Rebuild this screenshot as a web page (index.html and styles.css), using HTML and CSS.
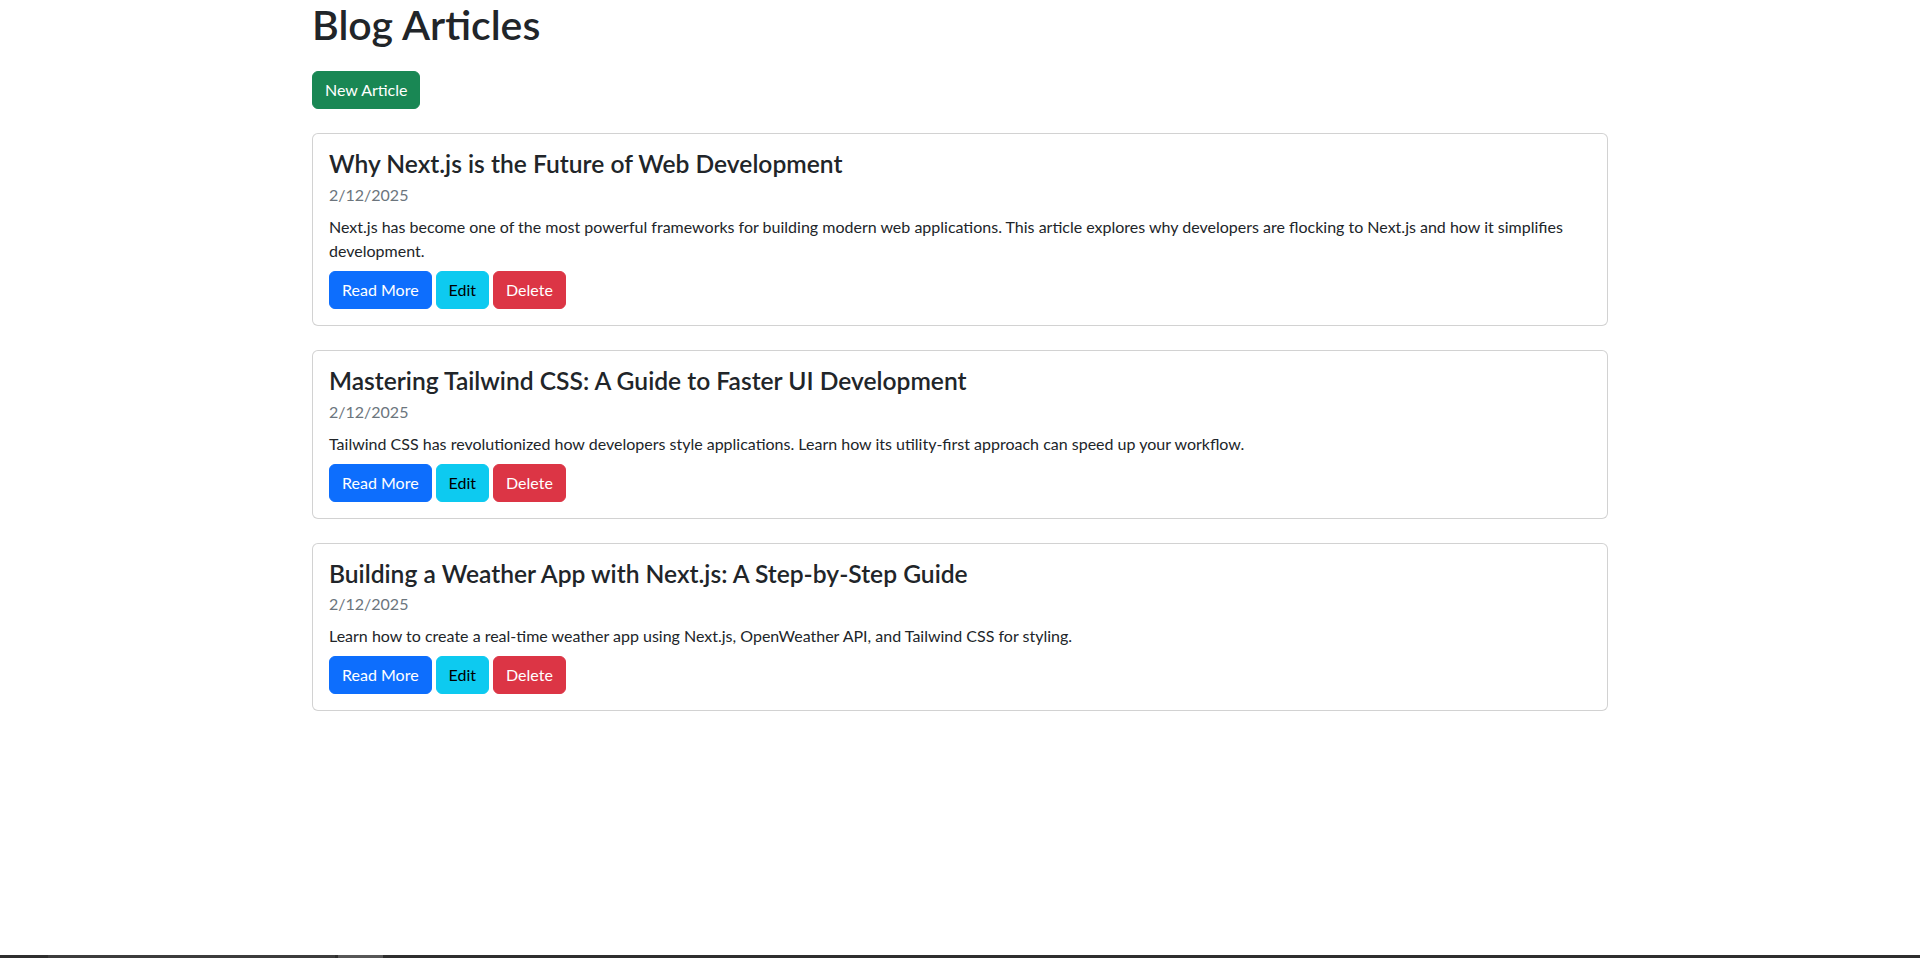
FILE: index.html
```html
<!DOCTYPE html>
<html lang="en">
<head>
<meta charset="utf-8">
<title>Blog Articles</title>
<link rel="stylesheet" href="styles.css">
</head>
<body>
<main class="container">
  <h1 class="page-title">Blog Articles</h1>
  <button class="btn btn-success new-btn" type="button">New Article</button>

  <div class="article-list">
    <div class="card">
      <div class="card-body">
        <h4 class="card-title">Why Next.js is the Future of Web Development</h4>
        <p class="card-date">2/12/2025</p>
        <p class="card-text">Next.js has become one of the most powerful frameworks for building modern web applications. This article explores why developers are flocking to Next.js and how it simplifies development.</p>
        <div class="actions">
          <button class="btn btn-primary" type="button">Read More</button>
          <button class="btn btn-info" type="button">Edit</button>
          <button class="btn btn-danger" type="button">Delete</button>
        </div>
      </div>
    </div>

    <div class="card">
      <div class="card-body">
        <h4 class="card-title">Mastering Tailwind CSS: A Guide to Faster UI Development</h4>
        <p class="card-date">2/12/2025</p>
        <p class="card-text">Tailwind CSS has revolutionized how developers style applications. Learn how its utility-first approach can speed up your workflow.</p>
        <div class="actions">
          <button class="btn btn-primary" type="button">Read More</button>
          <button class="btn btn-info" type="button">Edit</button>
          <button class="btn btn-danger" type="button">Delete</button>
        </div>
      </div>
    </div>

    <div class="card">
      <div class="card-body">
        <h4 class="card-title">Building a Weather App with Next.js: A Step-by-Step Guide</h4>
        <p class="card-date">2/12/2025</p>
        <p class="card-text">Learn how to create a real-time weather app using Next.js, OpenWeather API, and Tailwind CSS for styling.</p>
        <div class="actions">
          <button class="btn btn-primary" type="button">Read More</button>
          <button class="btn btn-info" type="button">Edit</button>
          <button class="btn btn-danger" type="button">Delete</button>
        </div>
      </div>
    </div>
  </div>
</main>
<div class="bottom-edge"><span class="edge-seg"></span><span class="edge-seg2"></span></div>
</body>
</html>
```
FILE: styles.css
```css
*, *::before, *::after { box-sizing: border-box; }

html, body {
  margin: 0;
  padding: 0;
  background: #fff;
}

body {
  font-family: Lato, "Open Sans", "Liberation Sans", sans-serif;
  font-size: 16px;
  line-height: 1.5;
  color: #212529;
}

.container {
  width: 100%;
  max-width: 1320px;
  margin: 0 auto;
  padding: 0 12px;
}

.page-title {
  margin: 0 0 23px;
  padding-top: 1px;
  font-size: 41px;
  font-weight: 600;
  line-height: 47px;
  color: #212529;
}

.new-btn {
  margin-bottom: 24px;
}

.btn {
  display: inline-block;
  font-family: inherit;
  font-size: 16px;
  font-weight: 400;
  line-height: 24px;
  padding: 6px 12px;
  border: 1px solid transparent;
  border-radius: 6px;
  cursor: pointer;
  text-align: center;
}

.btn-success { background: #198754; border-color: #198754; color: #fff; }
.btn-primary { background: #0d6efd; border-color: #0d6efd; color: #fff; }
.btn-info    { background: #0dcaf0; border-color: #0dcaf0; color: #000; }
.btn-danger  { background: #dc3545; border-color: #dc3545; color: #fff; }

.article-list {
  display: flex;
  flex-direction: column;
  gap: 24px;
}

.card {
  border: 1px solid rgba(0, 0, 0, 0.175);
  border-radius: 6px;
  background: #fff;
}

.card-body {
  padding: 16px;
}

.card-title {
  margin: 0 0 4px;
  font-size: 24.6px;
  font-weight: 600;
  line-height: 28.8px;
}

.card-date {
  margin: 0 0 8px;
  color: #6c757d;
}

.card-text {
  margin: 0 0 8px;
}

.actions {
  display: flex;
  gap: 4px;
}

.bottom-edge {
  position: fixed;
  left: 0;
  right: 0;
  bottom: 0;
  height: 3px;
  background: #2e2e2e;
  display: flex;
}

.edge-seg {
  margin-left: 48px;
  width: 287px;
  background: #3c3c3c;
}

.edge-seg2 {
  margin-left: 3px;
  width: 45px;
  background: #575757;
}
```
